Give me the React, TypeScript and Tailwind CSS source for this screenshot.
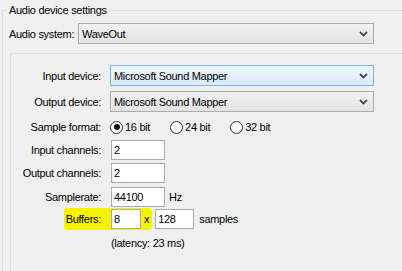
import React from "react";

function Chevron() {
  return (
    <svg width="9" height="6" viewBox="0 0 9 6" className="shrink-0">
      <path d="M1 1 L4.5 4.5 L8 1" fill="none" stroke="#4a4a4a" strokeWidth="1.8" />
    </svg>
  );
}

function Select({ text, width, blue }: { text: string; width: number; blue?: boolean }) {
  return (
    <div
      className={
        "flex h-[21px] items-center justify-between border pl-[3px] pr-[5px] " +
        (blue
          ? "border-[#7eb4ea] bg-gradient-to-b from-[#edf5fd] to-[#dcecfc]"
          : "border-[#acacac] bg-gradient-to-b from-[#f2f2f2] to-[#e4e4e4]")
      }
      style={{ width }}
    >
      <span className="whitespace-nowrap">{text}</span>
      <Chevron />
    </div>
  );
}

function TextBox({ value, width }: { value: string; width: number }) {
  return (
    <div
      className="ml-[1px] flex h-[20px] items-center border border-[#abadb3] bg-white pl-[2px]"
      style={{ width }}
    >
      {value}
    </div>
  );
}

function Radio({ checked, label }: { checked?: boolean; label: string }) {
  return (
    <div className="flex items-center">
      <div className="flex h-[13px] w-[13px] items-center justify-center rounded-full border border-[#333333] bg-white">
        {checked && <div className="h-[6px] w-[6px] rounded-full bg-[#111111]" />}
      </div>
      <span className="ml-[2px] whitespace-nowrap">{label}</span>
    </div>
  );
}

function Row({
  label,
  children,
  className = "",
}: {
  label: string;
  children: React.ReactNode;
  className?: string;
}) {
  return (
    <div className={"flex items-center " + className}>
      <div className="w-[90px] whitespace-nowrap text-right">{label}</div>
      <div className="ml-[9px] flex items-center">{children}</div>
    </div>
  );
}

export default function App() {
  return (
    <div
      className="h-[271px] w-[402px] overflow-hidden bg-[#f0f0f0] text-[11px] leading-[14px] tracking-[-0.3px] text-black"
      style={{ fontFamily: '"Liberation Sans", Arial, sans-serif' }}
    >
      <fieldset className="ml-[2px] mt-[3px] h-[300px] w-[440px] border-l border-t border-[#d5dfe5]">
        <legend className="ml-[4px] whitespace-nowrap px-[2px] leading-[14px]">Audio device settings</legend>
        <div className="mt-[6px] flex items-center pl-[6px]">
          <div className="w-[69px] whitespace-nowrap">Audio system:</div>
          <Select text="WaveOut" width={296} />
        </div>
        <div className="ml-[7px] mt-[9px] h-[260px] w-[440px] border-l border-t border-[#d5dfe5]">
          <Row label="Input device:" className="mt-[11px]">
            <Select text="Microsoft Sound Mapper" width={264} blue />
          </Row>
          <Row label="Output device:" className="mt-[5px]">
            <Select text="Microsoft Sound Mapper" width={264} />
          </Row>
          <Row label="Sample format:" className="mt-[4px] h-[22px]">
            <div className="flex items-center gap-[20px]">
              <Radio checked label="16 bit" />
              <Radio label="24 bit" />
              <Radio label="32 bit" />
            </div>
          </Row>
          <Row label="Input channels:" className="mt-[2px]">
            <TextBox value="2" width={54} />
          </Row>
          <Row label="Output channels:" className="mt-[3px]">
            <TextBox value="2" width={54} />
          </Row>
          <Row label="Samplerate:" className="mt-[4px]">
            <TextBox value="44100" width={54} />
            <span className="ml-[4px]">Hz</span>
          </Row>
          <div className="relative mt-[2px]">
            <div className="absolute left-[53px] top-[-1px] h-[22px] w-[88px] rounded-[3px] bg-[#f4f400]" />
            <Row label="Buffers:" className="relative">
              <TextBox value="8" width={30} />
              <span className="ml-[3px]">x</span>
              <div className="ml-[5px] flex">
                <TextBox value="128" width={39} />
              </div>
              <span className="ml-[5px]">samples</span>
            </Row>
          </div>
          <div className="ml-[100px] mt-[7px]">(latency: 23 ms)</div>
        </div>
      </fieldset>
    </div>
  );
}
